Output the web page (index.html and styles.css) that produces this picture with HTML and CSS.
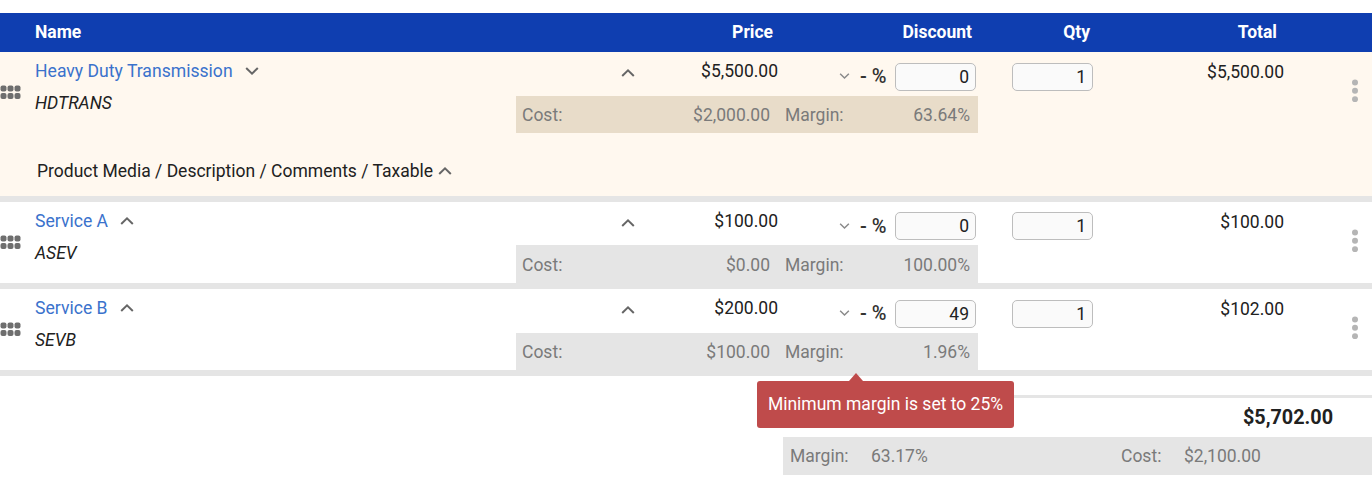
FILE: index.html
```html
<!DOCTYPE html>
<html lang="en">
<head>
<meta charset="utf-8">
<title>Quote lines</title>
<link rel="stylesheet" href="styles.css">
</head>
<body>
<svg class="defs" width="0" height="0" aria-hidden="true">
  <symbol id="up" viewBox="0 0 14 8"><path d="M1.2 7 7 1.4 12.8 7" fill="none" stroke="currentColor" stroke-width="2"/></symbol>
  <symbol id="down" viewBox="0 0 14 8"><path d="M1.2 1 7 6.6 12.8 1" fill="none" stroke="currentColor" stroke-width="2"/></symbol>
  <symbol id="grip" viewBox="0 0 21 15"><g fill="currentColor"><rect x="0.5" y="0.5" width="6" height="6" rx="2"/><rect x="7.5" y="0.5" width="6" height="6" rx="2"/><rect x="14.5" y="0.5" width="6" height="6" rx="2"/><rect x="0.5" y="8" width="6" height="6" rx="2"/><rect x="7.5" y="8" width="6" height="6" rx="2"/><rect x="14.5" y="8" width="6" height="6" rx="2"/></g></symbol>
  <symbol id="dots" viewBox="0 0 6 22"><g fill="currentColor"><circle cx="3" cy="3" r="3"/><circle cx="3" cy="11.3" r="3"/><circle cx="3" cy="19.7" r="3"/></g></symbol>
</svg>

<div class="head">
  <div class="h-name">Name</div>
  <div class="h-price">Price</div>
  <div class="h-disc">Discount</div>
  <div class="h-qty">Qty</div>
  <div class="h-total">Total</div>
</div>

<div class="row row-open">
  <svg class="grip"><use href="#grip"/></svg>
  <div class="name">
    <div class="title"><a>Heavy Duty Transmission</a><svg class="chev chev-title"><use href="#down"/></svg></div>
    <div class="sku">HDTRANS</div>
  </div>
  <div class="mid">
    <div class="top">
      <svg class="chev chev-price"><use href="#up"/></svg>
      <span class="price">$5,500.00</span>
      <svg class="chev-small"><use href="#down"/></svg>
      <span class="pct">- %</span>
      <input class="box" value="0" aria-label="Discount">
    </div>
    <div class="cost cost-tan">
      <span class="c-l">Cost:</span><span class="c-v">$2,000.00</span><span class="c-m">Margin:</span><span class="c-p">63.64%</span>
    </div>
  </div>
  <input class="box qty" value="1" aria-label="Qty">
  <div class="total">$5,500.00</div>
  <svg class="dots"><use href="#dots"/></svg>
  <div class="extra">Product Media / Description / Comments / Taxable<svg class="chev chev-extra"><use href="#up"/></svg></div>
</div>

<div class="row row-tight">
  <svg class="grip"><use href="#grip"/></svg>
  <div class="name">
    <div class="title"><a>Service A</a><svg class="chev chev-title"><use href="#up"/></svg></div>
    <div class="sku">ASEV</div>
  </div>
  <div class="mid">
    <div class="top">
      <svg class="chev chev-price"><use href="#up"/></svg>
      <span class="price">$100.00</span>
      <svg class="chev-small"><use href="#down"/></svg>
      <span class="pct">- %</span>
      <input class="box" value="0" aria-label="Discount">
    </div>
    <div class="cost">
      <span class="c-l">Cost:</span><span class="c-v">$0.00</span><span class="c-m">Margin:</span><span class="c-p">100.00%</span>
    </div>
  </div>
  <input class="box qty" value="1" aria-label="Qty">
  <div class="total">$100.00</div>
  <svg class="dots"><use href="#dots"/></svg>
</div>

<div class="row">
  <svg class="grip"><use href="#grip"/></svg>
  <div class="name">
    <div class="title"><a>Service B</a><svg class="chev chev-title"><use href="#up"/></svg></div>
    <div class="sku">SEVB</div>
  </div>
  <div class="mid">
    <div class="top">
      <svg class="chev chev-price"><use href="#up"/></svg>
      <span class="price">$200.00</span>
      <svg class="chev-small"><use href="#down"/></svg>
      <span class="pct">- %</span>
      <input class="box" value="49" aria-label="Discount">
    </div>
    <div class="cost">
      <span class="c-l">Cost:</span><span class="c-v">$100.00</span><span class="c-m">Margin:</span><span class="c-p">1.96%</span>
    </div>
  </div>
  <input class="box qty" value="1" aria-label="Qty">
  <div class="total">$102.00</div>
  <svg class="dots"><use href="#dots"/></svg>
</div>

<div class="summary">
  <div class="grand">$5,702.00</div>
  <div class="sum-bar">
    <span class="s-l">Margin:</span><span class="s-v">63.17%</span><span class="s-c">Cost:</span><span class="s-a">$2,100.00</span>
  </div>
  <div class="tip">Minimum margin is set to 25%</div>
</div>
</body>
</html>
```

FILE: styles.css
```css
* { box-sizing: border-box; }
html, body { margin: 0; padding: 0; }
body {
  padding-top: 13px;
  height: 503px;
  overflow: hidden;
  background: #fff;
  color: #212121;
  font: 17.5px/24px Roboto, "Liberation Sans", sans-serif;
}
.defs { position: absolute; }

.head {
  display: flex;
  height: 39px;
  padding-bottom: 2px;
  align-items: center;
  background: #0f3eb0;
  color: #fff;
  font-weight: 700;
}
.h-name { width: 81px; margin-left: 35px; }
.h-price { width: 657px; text-align: right; }
.h-disc { width: 199px; text-align: right; }
.h-qty { width: 118px; text-align: right; }
.h-total { width: 187px; text-align: right; }

.row {
  display: flex;
  flex-wrap: wrap;
  align-items: flex-start;
  align-content: flex-start;
  height: 81px;
  margin-bottom: 6px;
  background: #fff;
  box-shadow: 0 6px 0 #e5e5e5;
}
.row-open { height: 144px; background: #fff8ef; }

.grip { width: 21px; height: 15px; margin-top: 33px; color: #6e6e6e; flex: none; }
.name { width: 481px; margin-left: 14px; flex: none; }
.title { display: flex; align-items: center; height: 24px; margin-top: 7px; }
.title a { color: #3a72cc; font-size: 17.6px; }
.sku { margin-top: 8px; font-style: italic; }

.chev { width: 14px; height: 8px; color: #666; display: block; flex: none; }
.chev-title { margin-left: 12px; }
.chev-small { width: 11px; height: 6px; color: #8a8a8a; margin: 21px 0 0 61px; flex: none; }

.mid { width: 462px; flex: none; }
.top { display: flex; height: 44px; align-items: flex-start; }
.chev-price { margin: 17px 0 0 105px; }
.price { width: 143px; margin-top: 7px; text-align: right; }
.pct { margin: 12px 0 0 10px; font-size: 20px; font-weight: 500; width: 27px; white-space: nowrap; color: #333; }
.top .box { margin: 11px 0 0 8px; }

.box {
  width: 81px;
  height: 28px;
  padding: 0 6px;
  border: 1px solid #bdbdbd;
  border-radius: 5px;
  background: #fafafa;
  color: #212121;
  font: 17.5px Roboto, sans-serif;
  text-align: right;
  flex: none;
}
.qty { margin: 11px 0 0 34px; }

.cost {
  display: flex;
  height: 37px;
  align-items: center;
  padding: 0 8px 0 6px;
  background: #e5e5e5;
  color: #7a7a7a;
}
.cost-tan { background: #e8dcc9; }
.c-l { width: 40px; }
.c-v { width: 208px; text-align: right; }
.c-m { margin-left: 15px; width: 70px; }
.c-p { flex: 1; text-align: right; }

.row-tight .top { height: 43px; }
.row-tight .top .box, .row-tight .qty { margin-top: 10px; }
.row-tight .cost { height: 38px; padding-top: 1px; }

.total { width: 191px; margin-top: 8px; text-align: right; flex: none; }
.dots { width: 6px; height: 23px; margin: 27px 0 0 68px; color: #b5b5b5; flex: none; }

.extra { display: flex; align-items: center; width: 100%; margin-top: 26px; padding-left: 37px; }
.chev-extra { margin-left: 5px; }

.summary { position: relative; height: 127px; padding-top: 19px; }
.grand {
  height: 42px;
  margin-left: 783px;
  padding: 8px 39px 0 0;
  border-top: 3px solid #e5e5e5;
  text-align: right;
  font-size: 19.8px;
  font-weight: 700;
}
.sum-bar {
  display: flex;
  align-items: center;
  height: 38px;
  margin-left: 783px;
  padding-left: 7px;
  background: #e5e5e5;
  color: #7a7a7a;
}
.s-l { width: 81px; }
.s-v { width: 250px; }
.s-c { width: 63px; }

.tip {
  position: absolute;
  left: 757px;
  top: 5px;
  width: 257px;
  height: 47px;
  border-radius: 3px;
  background: #bf4b4b;
  color: #fff;
  line-height: 47px;
  text-align: center;
}
.tip::before {
  content: "";
  position: absolute;
  left: 92px;
  top: -8px;
  border-left: 7px solid transparent;
  border-right: 7px solid transparent;
  border-bottom: 8px solid #bf4b4b;
}
```
